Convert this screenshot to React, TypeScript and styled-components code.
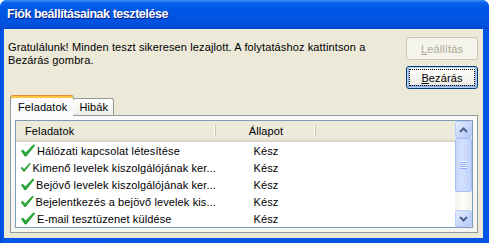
import React from 'react';
import styled, { createGlobalStyle } from 'styled-components';

const GlobalStyle = createGlobalStyle`
  body {
    margin: 0;
    padding: 0;
    background: #ffffff;
  }
  * {
    box-sizing: border-box;
  }
`;

const Window = styled.div`
  width: 489px;
  height: 243px;
  display: flex;
  flex-direction: column;
  font-family: 'Liberation Sans', Arial, sans-serif;
  font-size: 11px;
  letter-spacing: 0.12px;
  color: #000;
  background: #0055e5;
  border-radius: 7px 7px 0 0;
  overflow: hidden;
`;

const TitleBar = styled.div`
  height: 29px;
  flex: none;
  display: flex;
  align-items: center;
  padding: 0 0 1px 7px;
  background: linear-gradient(
    180deg,
    #3d8ef5 0px,
    #0a62ea 3px,
    #0058e6 8px,
    #0055e3 18px,
    #0050da 26px,
    #0046cc 29px
  );
  color: #fff;
  font-family: 'Liberation Sans', Arial, sans-serif;
  font-weight: bold;
  font-size: 12.5px;
  letter-spacing: -0.45px;
  text-shadow: 1px 1px 0 #0a1883;
`;

const Frame = styled.div`
  flex: 1;
  display: flex;
  padding: 0 6px 5px 4px;
  background: linear-gradient(90deg, #0042d0 0, #0058ea 2px, #0055e5 100%);
`;

const Client = styled.div`
  flex: 1;
  display: flex;
  flex-direction: column;
  background: #ece9d8;
  padding: 8px 5px 5px 4px;
`;

const TopRow = styled.div`
  height: 58px;
  flex: none;
  display: flex;
`;

const Message = styled.div`
  flex: 1;
  padding-top: 4px;
  line-height: 13px;
  white-space: nowrap;
`;

const ButtonColumn = styled.div`
  width: 72px;
  display: flex;
  flex-direction: column;
  gap: 6px;
`;

const Button = styled.button<{ $isDefault?: boolean }>`
  width: 72px;
  height: 23px;
  padding: 2px;
  font-family: inherit;
  font-size: 11px;
  letter-spacing: inherit;
  color: #000;
  border: 1px solid #003c74;
  border-radius: 3px;
  background: linear-gradient(180deg, #ffffff 0%, #f6f6f2 50%, #ecebe4 85%, #d8d4c8 100%);
  box-shadow: ${(p) => (p.$isDefault ? 'inset 0 0 0 1px #b6cdf5, inset 0 -1px 0 2px #8fb0e8' : 'none')};
  display: flex;

  &:disabled {
    color: #aca899;
    border-color: #c9c7ba;
    background: #f5f4ea;
    box-shadow: none;
  }
`;

const FocusRect = styled.span<{ $show?: boolean }>`
  flex: 1;
  display: flex;
  align-items: center;
  justify-content: center;
  border: 1px dotted ${(p) => (p.$show ? '#000' : 'transparent')};
`;

const TabArea = styled.div`
  flex: 1;
  display: flex;
  flex-direction: column;
  margin-left: 2px;
`;

const TabStrip = styled.div`
  height: 21px;
  flex: none;
  display: flex;
  align-items: flex-end;
  margin-bottom: -1px;
  position: relative;
  z-index: 1;
`;

const Tab = styled.div<{ $active?: boolean }>`
  height: ${(p) => (p.$active ? '21px' : '18px')};
  padding: ${(p) => (p.$active ? '1px 6px 0 7px' : '0 5px 0 5px')};
  display: flex;
  align-items: center;
  border: 1px solid #919b9c;
  border-bottom: ${(p) => (p.$active ? 'none' : '1px solid #919b9c')};
  border-top-color: ${(p) => (p.$active ? '#e68b2c' : '#919b9c')};
  border-radius: 3px 3px 0 0;
  background: ${(p) =>
    p.$active
      ? '#fcfcfe'
      : 'linear-gradient(180deg, #ffffff 0%, #f8f8f5 60%, #ecebe5 100%)'};
  box-shadow: ${(p) => (p.$active ? 'inset 0 2px 0 #ffc83c' : 'none')};
  margin-left: ${(p) => (p.$active ? '0' : '-1px')};
  border-left-color: ${(p) => (p.$active ? '#919b9c' : 'transparent')};
`;

const Panel = styled.div`
  flex: 1;
  display: flex;
  border: 1px solid #919b9c;
  background: linear-gradient(180deg, #fcfcfe 0%, #f7f7f4 60%, #f4f3ee 100%);
  padding: 4px;
`;

const ListView = styled.div`
  flex: 1;
  display: flex;
  border: 1px solid #7f9db9;
  background: #fff;
  overflow: hidden;
`;

const ListContent = styled.div`
  flex: 1;
  display: flex;
  flex-direction: column;
  overflow: hidden;
`;

const HeaderRow = styled.div`
  height: 21px;
  flex: none;
  display: flex;
  background: linear-gradient(180deg, #ebeadb 0%, #ebeadb 80%, #e3e1cf 90%, #d6d2c2 100%);
`;

const HeaderCell = styled.div<{ $width?: number; $center?: boolean }>`
  width: ${(p) => (p.$width ? `${p.$width}px` : 'auto')};
  flex: ${(p) => (p.$width ? 'none' : '1')};
  display: flex;
  align-items: center;
  justify-content: ${(p) => (p.$center ? 'center' : 'flex-start')};
  padding: 0 0 2px ${(p) => (p.$center ? '0' : '9px')};
  position: relative;

  &::after {
    content: '';
    display: ${(p) => (p.$width ? 'block' : 'none')};
    position: absolute;
    right: 0;
    top: 4px;
    bottom: 5px;
    width: 1px;
    background: #c7c5b2;
    box-shadow: -1px 0 0 #ffffff;
  }
`;

const Row = styled.div`
  height: 17px;
  flex: none;
  display: flex;
  align-items: center;
`;

const TaskCell = styled.div`
  width: 200px;
  flex: none;
  display: flex;
  align-items: center;
  padding-left: 4px;
  gap: 1px;
  white-space: nowrap;
  overflow: hidden;
`;

const StatusCell = styled.div`
  width: 100px;
  flex: none;
  text-align: center;
`;

const ScrollBar = styled.div`
  width: 17px;
  flex: none;
  display: flex;
  flex-direction: column;
  background: linear-gradient(90deg, #f3f1ec 0%, #fefefb 50%, #f3f1ec 100%);
`;

const ScrollButton = styled.div`
  height: 17px;
  flex: none;
  display: flex;
  align-items: center;
  justify-content: center;
  border: 1px solid #bbcdf8;
  border-radius: 2px;
  background: linear-gradient(135deg, #e2ebfe 0%, #cbdafc 50%, #b5c9f7 100%);
`;

const Thumb = styled.div`
  height: 54px;
  flex: none;
  display: flex;
  align-items: center;
  justify-content: center;
  border: 1px solid #a6bff3;
  border-radius: 2px;
  background: linear-gradient(90deg, #c6d6fc 0%, #d3e0fe 40%, #c1d2fb 100%);
`;

const Spacer = styled.div`
  flex: 1;
`;

const Check = () => (
  <svg width="16" height="15" viewBox="0 0 16 15">
    <path d="M1 8.2 L2.8 6.6 L5.6 9.6 L13.6 1.2 L15.2 2.4 L6.2 13.6 L5 13.6 Z" fill="#1f9a2f" />
    <path d="M2.2 7.8 L5.6 11.4 L14.2 2" stroke="#3cbf4a" strokeWidth="0.8" fill="none" />
  </svg>
);

const Chevron = ({ up }: { up?: boolean }) => (
  <svg width="9" height="6" viewBox="0 0 9 6">
    <path
      d={up ? 'M1 5 L4.5 1.5 L8 5' : 'M1 1 L4.5 4.5 L8 1'}
      stroke="#4d6185"
      strokeWidth="2"
      fill="none"
    />
  </svg>
);

const Grip = () => (
  <svg width="7" height="8" viewBox="0 0 7 8">
    {[0, 2, 4, 6].map((y) => (
      <g key={y}>
        <rect x="0" y={y} width="7" height="1" fill="#eef4fe" />
        <rect x="0" y={y + 1} width="7" height="1" fill="#8cb0f8" />
      </g>
    ))}
  </svg>
);

const tasks = [
  'Hálózati kapcsolat létesítése',
  'Kimenő levelek kiszolgálójának ker...',
  'Bejövő levelek kiszolgálójának ker...',
  'Bejelentkezés a bejövő levelek kis...',
  'E-mail tesztüzenet küldése',
];

const App = () => {
  return (
    <Window>
      <GlobalStyle />
      <TitleBar>Fiók beállításainak tesztelése</TitleBar>
      <Frame>
        <Client>
          <TopRow>
            <Message>
              Gratulálunk! Minden teszt sikeresen lezajlott. A folytatáshoz kattintson a
              <br />
              Bezárás gombra.
            </Message>
            <ButtonColumn>
              <Button disabled>
                <FocusRect>
                  <u>L</u>eállítás
                </FocusRect>
              </Button>
              <Button $isDefault>
                <FocusRect $show>
                  <u>B</u>ezárás
                </FocusRect>
              </Button>
            </ButtonColumn>
          </TopRow>
          <TabArea>
            <TabStrip>
              <Tab $active>Feladatok</Tab>
              <Tab>Hibák</Tab>
            </TabStrip>
            <Panel>
              <ListView>
                <ListContent>
                  <HeaderRow>
                    <HeaderCell $width={200}>Feladatok</HeaderCell>
                    <HeaderCell $width={100} $center>
                      Állapot
                    </HeaderCell>
                    <HeaderCell />
                  </HeaderRow>
                  {tasks.map((task, key) => (
                    <Row key={key}>
                      <TaskCell>
                        <Check />
                        {task}
                      </TaskCell>
                      <StatusCell>Kész</StatusCell>
                    </Row>
                  ))}
                </ListContent>
                <ScrollBar>
                  <ScrollButton>
                    <Chevron up />
                  </ScrollButton>
                  <Thumb>
                    <Grip />
                  </Thumb>
                  <Spacer />
                  <ScrollButton>
                    <Chevron />
                  </ScrollButton>
                </ScrollBar>
              </ListView>
            </Panel>
          </TabArea>
        </Client>
      </Frame>
    </Window>
  );
};

export default App;
